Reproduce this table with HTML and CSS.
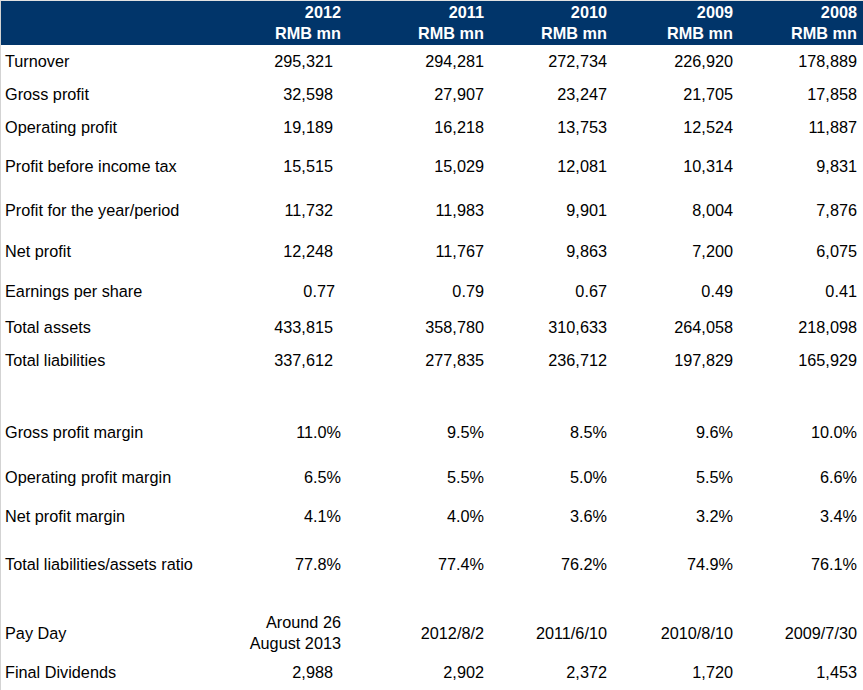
FILE: index.html
```html
<!DOCTYPE html>
<html>
<head>
<meta charset="utf-8">
<link rel="stylesheet" href="styles.css">
</head>
<body>
<div class="sheet">
  <div class="row head">
    <div class="c lbl"></div>
    <div class="c">2012<br>RMB mn</div>
    <div class="c">2011<br>RMB mn</div>
    <div class="c">2010<br>RMB mn</div>
    <div class="c">2009<br>RMB mn</div>
    <div class="c">2008<br>RMB mn</div>
  </div>
  <div class="body">
    <div class="row h33"><div class="c lbl">Turnover</div><div class="c n">295,321</div><div class="c">294,281</div><div class="c">272,734</div><div class="c">226,920</div><div class="c">178,889</div></div>
    <div class="row h33"><div class="c lbl">Gross profit</div><div class="c n">32,598</div><div class="c">27,907</div><div class="c">23,247</div><div class="c">21,705</div><div class="c">17,858</div></div>
    <div class="row h39"><div class="c lbl">Operating profit</div><div class="c n">19,189</div><div class="c">16,218</div><div class="c">13,753</div><div class="c">12,524</div><div class="c">11,887</div></div>
    <div class="row h44"><div class="c lbl">Profit before income tax</div><div class="c n">15,515</div><div class="c">15,029</div><div class="c">12,081</div><div class="c">10,314</div><div class="c">9,831</div></div>
    <div class="row h41"><div class="c lbl">Profit for the year/period</div><div class="c n">11,732</div><div class="c">11,983</div><div class="c">9,901</div><div class="c">8,004</div><div class="c">7,876</div></div>
    <div class="row h40"><div class="c lbl">Net profit</div><div class="c n">12,248</div><div class="c">11,767</div><div class="c">9,863</div><div class="c">7,200</div><div class="c">6,075</div></div>
    <div class="row h36"><div class="c lbl">Earnings per share</div><div class="c n eps">0.77</div><div class="c">0.79</div><div class="c">0.67</div><div class="c">0.49</div><div class="c">0.41</div></div>
    <div class="row h33"><div class="c lbl">Total assets</div><div class="c n">433,815</div><div class="c">358,780</div><div class="c">310,633</div><div class="c">264,058</div><div class="c">218,098</div></div>
    <div class="row h72"><div class="c lbl">Total liabilities</div><div class="c n">337,612</div><div class="c">277,835</div><div class="c">236,712</div><div class="c">197,829</div><div class="c">165,929</div></div>
    <div class="row h45"><div class="c lbl">Gross profit margin</div><div class="c">11.0%</div><div class="c">9.5%</div><div class="c">8.5%</div><div class="c">9.6%</div><div class="c">10.0%</div></div>
    <div class="row h39"><div class="c lbl">Operating profit margin</div><div class="c">6.5%</div><div class="c">5.5%</div><div class="c">5.0%</div><div class="c">5.5%</div><div class="c">6.6%</div></div>
    <div class="row h48"><div class="c lbl">Net profit margin</div><div class="c">4.1%</div><div class="c">4.0%</div><div class="c">3.6%</div><div class="c">3.2%</div><div class="c">3.4%</div></div>
    <div class="row h57"><div class="c lbl">Total liabilities/assets ratio</div><div class="c">77.8%</div><div class="c">77.4%</div><div class="c">76.2%</div><div class="c">74.9%</div><div class="c">76.1%</div></div>
    <div class="row h51 pay"><div class="c lbl">Pay Day</div><div class="c two">Around 26<br>August 2013</div><div class="c">2012/8/2</div><div class="c">2011/6/10</div><div class="c">2010/8/10</div><div class="c">2009/7/30</div></div>
    <div class="row h33"><div class="c lbl">Final Dividends</div><div class="c n">2,988</div><div class="c">2,902</div><div class="c">2,372</div><div class="c">1,720</div><div class="c">1,453</div></div>
  </div>
</div>
</body>
</html>
```

FILE: styles.css
```css
html, body {
  margin: 0;
  padding: 0;
  background: #ffffff;
}
body {
  font-family: "Liberation Sans", Arial, sans-serif;
  font-size: 16.25px;
  color: #000000;
  width: 863px;
  height: 690px;
  overflow: hidden;
}
.sheet {
  border-left: 1px solid #d3d3d3;
  border-top: 1px solid #e2e2e2;
  height: 689px;
  padding-right: 4px;
}
.row {
  display: grid;
  grid-template-columns: 199px 141px 143px 123px 126px 124px;
  align-items: start;
  line-height: 18px;
}
.c {
  text-align: right;
  white-space: nowrap;
}
.c.lbl {
  text-align: left;
  padding-left: 4px;
}
.c.n {
  padding-right: 8px;
}
.c.eps {
  padding-right: 6px;
}
.head {
  background: #01356a;
  color: #ffffff;
  font-weight: bold;
  height: 44px;
  line-height: 21px;
  padding-top: 1px;
  box-sizing: border-box;
  margin-right: -4px;
  padding-right: 4px;
}
.body {
  padding-top: 7px;
}
.h33 { height: 33px; }
.h36 { height: 36px; }
.h39 { height: 39px; }
.h40 { height: 40px; }
.h41 { height: 41px; }
.h44 { height: 44px; }
.h45 { height: 45px; }
.h48 { height: 48px; }
.h51 { height: 51px; }
.h57 { height: 57px; }
.h72 { height: 72px; }
.pay {
  line-height: 42px;
}
.pay .two {
  line-height: 21px;
}
```
